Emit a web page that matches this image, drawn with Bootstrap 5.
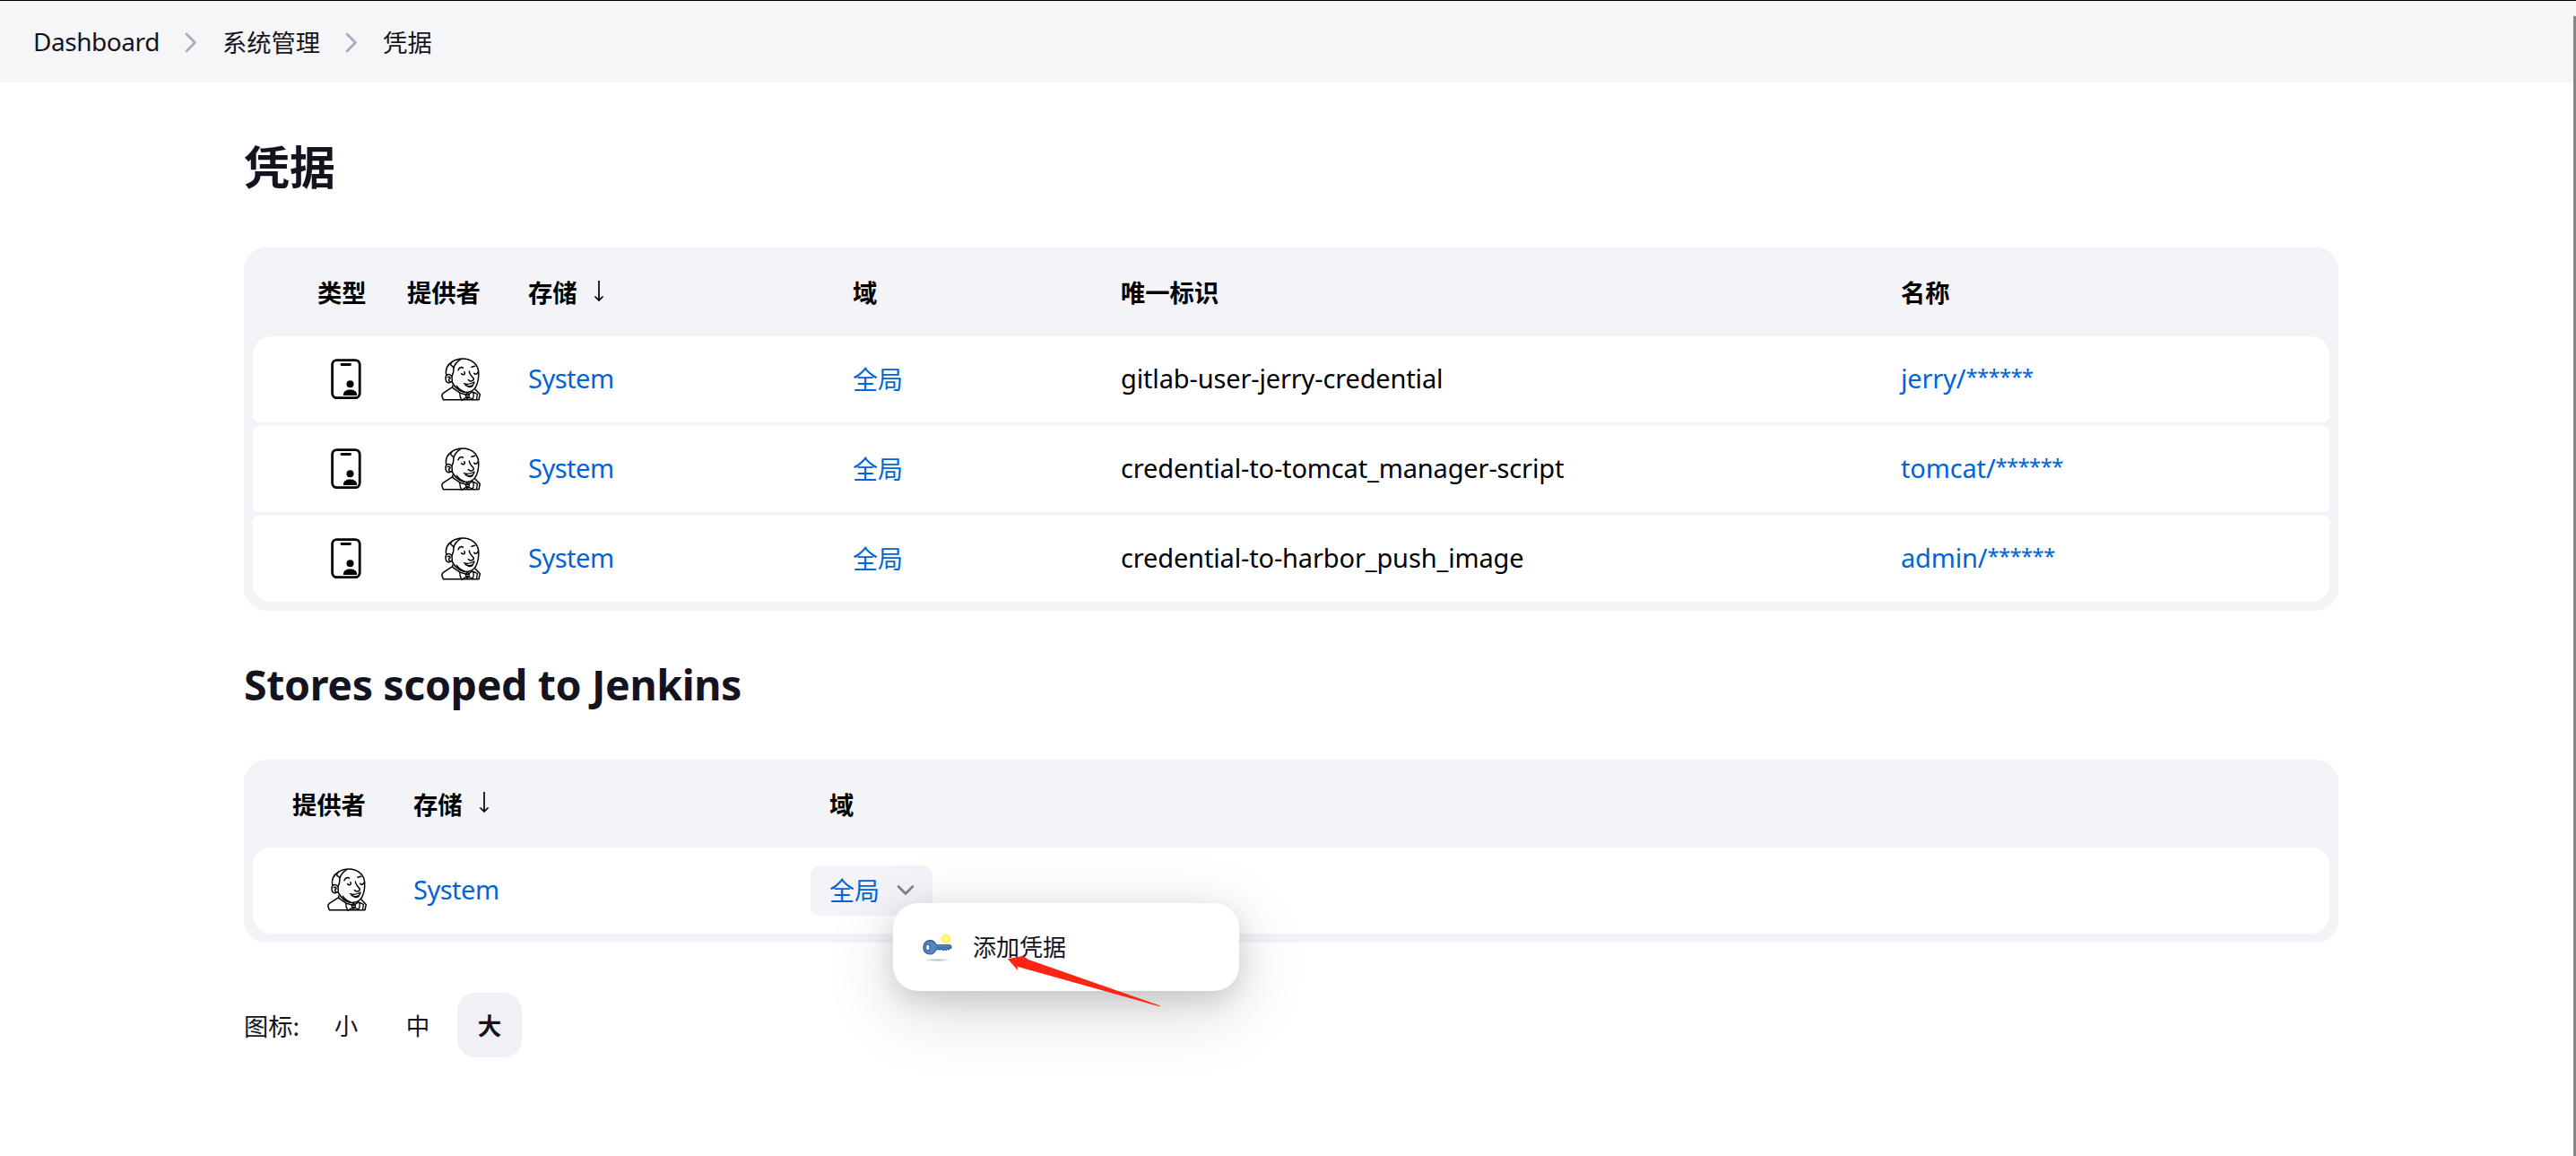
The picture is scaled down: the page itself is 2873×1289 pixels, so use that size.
<!DOCTYPE html>
<html lang="zh-CN">
<head>
<meta charset="utf-8">
<title>凭据 [Jenkins]</title>
<link href="https://cdn.jsdelivr.net/npm/bootstrap@5.3.0/dist/css/bootstrap.min.css" rel="stylesheet">
<style>
  body { font-family: "Noto Sans", "Noto Sans CJK SC", sans-serif; font-size: 28px; line-height: 40px; color: #14141f; background: #fff; height: 1289px; overflow: hidden; }
  .crumb-bar { height: 92px; background: #f6f6f8; border-top: 1px solid #000; padding: 0 0 2px 37px; }
  .zh { font-family: "Noto Sans CJK SC", sans-serif; font-size: 27.3px; }
  .crumb-root { letter-spacing: -.45px; }
  .crumb-sep { width: 14px; height: 24px; margin: 2px 28px 0; flex: none; }
  .lat { display: block; font-size: 29px; letter-spacing: -.15px; padding-bottom: 3px; }
  .store-name { letter-spacing: -.5px; }
  .stars { font-size: 24px; letter-spacing: -.7px; line-height: 0; vertical-align: 4px; }
  .page-main { padding: 0 265px 0 272px; }
  .page-title { font-family: "Noto Sans CJK SC", sans-serif; font-size: 51px; line-height: 60px; font-weight: 700; margin: 62px 0 62px; }
  .sub-title { font-size: 46.5px; line-height: 60px; font-weight: 700; letter-spacing: -.37px; margin: 52px 0 54px; white-space: nowrap; }
  .cred-table { background: #f3f3f8; border-radius: 25px; padding: 0 10px 10px; color: #000; }
  .cred-head, .cred-line { display: grid; align-items: center; }
  .cred-head { height: 99px; font-weight: 700; padding-bottom: 1px; }
  .scoped .cred-head { height: 98px; }
  .cred-line { height: 96px; background: #fff; border-radius: 7px; margin-bottom: 4px; }
  .cred-line:nth-child(2) { border-top-left-radius: 20px; border-top-right-radius: 20px; }
  .cred-line:last-child { border-bottom-left-radius: 20px; border-bottom-right-radius: 20px; margin-bottom: 0; }
  .all .cred-head, .all .cred-line { grid-template-columns: 72px 100px 135px 362px 299px 870px 1fr; }
  .scoped .cred-head, .scoped .cred-line { grid-template-columns: 44px 135px 464px 1fr; }
  .cred-table a { color: #0064d9; text-decoration: none; }
  .domain { font-size: 28px; padding-bottom: 2px; }
  .ico-type { width: 34px; height: 46px; margin-left: 15px; }
  .ico-jk { width: 44px; height: 48px; margin-left: 38px; }
  .scoped .ico-jk { margin: 0 0 3px 39px; }
  .scope-pill { width: 136px; height: 56px; border-radius: 11px; background: #f3f3f8; margin-left: -21px; padding: 0 20px 0 21px; }
  .chev { width: 20px; height: 12px; }
  .pop-menu { position: absolute; left: 92px; top: 42px; width: 386px; height: 98px; border-radius: 28px; background: #fff; padding: 0 33px; gap: 23px; color: #14141f; box-shadow: 0 10px 30px rgba(0,0,20,.13), 0 20px 80px rgba(0,0,20,.16); z-index: 5; }
  .pop-menu .zh { font-size: 26px; padding-bottom: 2px; }
  .key-ico { width: 33px; height: 33px; }
  .pointer { position: absolute; left: 1120px; top: 1062px; width: 178px; height: 64px; z-index: 6; }
  .size-row { margin-top: 56px; height: 72px; }
  .size-label { width: 78px; padding-bottom: 1px; }
  .size-opt { width: 72px; height: 72px; border-radius: 20px; padding-bottom: 1px; font-size: 26.5px; }
  .size-opt.current { background: #f1f0f7; font-weight: 700; }
  .scroll-thumb { position: absolute; right: 0; top: 18px; width: 3px; height: 1271px; background: #868686; }
  .sort { width: 12px; height: 25px; margin: 0 0 2px 18px; }
</style>
</head>
<body class="position-relative">
<svg class="d-none" xmlns="http://www.w3.org/2000/svg">
  <symbol id="type" viewBox="0 0 34 46">
    <rect x="1.600" y="1.600" width="30.600" height="42" rx="5" fill="none" stroke="#000" stroke-width="2.800"/>
    <path d="M12 6.500h9.500" stroke="#000" stroke-width="2.800" stroke-linecap="round"/>
    <circle cx="21.500" cy="28.300" r="4" fill="#000"/><path d="M14 41v-1.500c0-3 3.500-5 7.500-5s7.500 2 7.500 5V41z" fill="#000"/>
  </symbol>
  <symbol id="butler" viewBox="0 0 132 144">
    <g fill="none" stroke="#000" stroke-width="4.500" stroke-linecap="round" stroke-linejoin="round">
      <path d="M17 55C14 40 20 22 37 13C58 0 88-1 107 14C122 25 127 43 125 62C124 80 120 94 110 105C101 113 90 117 76 115C62 111 49 102 42 90L36 80"/>
      <path d="M65 5C52 14 43 23 42 35C42 45 41 53 36 61M37 13C31 20 29 26 38 28L42 34"/>
      <path d="M34 60C25 52 15 55 15 68C15 80 22 86 30 82L36 79M22 65C28 62 32 66 29 70C25 71 24 77 29 79M36 62L37 80"/>
      <path d="M57 41C60 32 69 29 73 34M102 31L113 28M68 53C72 58 78 57 79 52L78 47M110 52C114 57 121 55 122 49"/>
      <path d="M94 45C95 56 103 63 109 69C110 76 103 79 96 77L91 74"/>
      <path d="M76 86C87 90 101 87 111 81C110 95 91 98 81 91M87 94C96 100 104 97 106 93" stroke-width="4"/>
      <path d="M52 94C58 104 66 109 78 114M38 98L7 118C3 121 2 127 4 132L7 140H126L130 122L114 105M38 93L39 101L61 116"/>
      <path d="M62 117C62 127 64 135 69 142L87 130L104 138C110 133 110 120 105 113L88 125zM81 124L88 118L94 124L93 134L86 136zM108 115L121 121L119 137" stroke-width="4"/>
    </g>
  </symbol>
  <symbol id="crumb" viewBox="0 0 14 24"><path d="M2 3l9.500 9.500L2 22" fill="none" stroke="#acabbd" stroke-width="2.800" stroke-linecap="round" stroke-linejoin="round"/></symbol>
  <symbol id="down" viewBox="0 0 12 25"><path d="M6 1v22M1.500 18.500L6 23l4.500-4.500" fill="none" stroke="#000" stroke-width="1.700"/></symbol>
</svg>

<nav class="crumb-bar d-flex align-items-center">
  <span class="crumb-root">Dashboard</span>
  <svg class="crumb-sep"><use href="#crumb"/></svg>
  <span class="zh">系统管理</span>
  <svg class="crumb-sep"><use href="#crumb"/></svg>
  <span class="zh">凭据</span>
</nav>

<main class="page-main">
  <h1 class="page-title">凭据</h1>
  <section class="cred-table all">
    <div class="cred-head zh"><span></span><span>类型</span><span>提供者</span><span class="d-flex align-items-center">存储<svg class="sort"><use href="#down"/></svg></span><span>域</span><span>唯一标识</span><span>名称</span></div>
    <div class="cred-line"><span></span><svg class="ico-type"><use href="#type"/></svg><svg class="ico-jk"><use href="#butler"/></svg><a href="#" class="lat store-name">System</a><a href="#" class="zh domain">全局</a><span class="lat">gitlab-user-jerry-credential</span><a href="#" class="lat">jerry/<span class="stars">******</span></a></div>
    <div class="cred-line"><span></span><svg class="ico-type"><use href="#type"/></svg><svg class="ico-jk"><use href="#butler"/></svg><a href="#" class="lat store-name">System</a><a href="#" class="zh domain">全局</a><span class="lat">credential-to-tomcat_manager-script</span><a href="#" class="lat">tomcat/<span class="stars">******</span></a></div>
    <div class="cred-line"><span></span><svg class="ico-type"><use href="#type"/></svg><svg class="ico-jk"><use href="#butler"/></svg><a href="#" class="lat store-name">System</a><a href="#" class="zh domain">全局</a><span class="lat">credential-to-harbor_push_image</span><a href="#" class="lat">admin/<span class="stars">******</span></a></div>
  </section>

  <h2 class="sub-title">Stores scoped to Jenkins</h2>
  <section class="cred-table scoped">
    <div class="cred-head zh"><span></span><span>提供者</span><span class="d-flex align-items-center">存储<svg class="sort"><use href="#down"/></svg></span><span>域</span></div>
    <div class="cred-line"><span></span><svg class="ico-jk"><use href="#butler"/></svg><a href="#" class="lat store-name">System</a>
      <div class="scope-pill position-relative d-flex align-items-center justify-content-between">
        <a href="#" class="zh domain">全局</a>
        <svg class="chev" viewBox="0 0 20 12"><path d="M2 1.500l8 8 8-8" fill="none" stroke="#808087" stroke-width="2.600" stroke-linecap="round" stroke-linejoin="round"/></svg>
        <div class="pop-menu d-flex align-items-center">
          <svg class="key-ico" viewBox="0 0 33 33">
            <defs>
              <radialGradient id="glow"><stop offset="0" stop-color="#ffffd0"/><stop offset=".35" stop-color="#fff9a0"/><stop offset=".55" stop-color="#fff23a"/><stop offset="1" stop-color="#fff23a" stop-opacity="0"/></radialGradient>
              <radialGradient id="shade"><stop offset="0" stop-color="#bbb"/><stop offset="1" stop-color="#bbb" stop-opacity="0"/></radialGradient>
            </defs>
            <ellipse cx="16.500" cy="30.500" rx="16" ry="2" fill="url(#shade)"/>
            <circle cx="26" cy="7" r="6.500" fill="url(#glow)"/>
            <path d="M.8 16.300C.8 11.800 4 8.600 8.200 8.600c3.300 0 5.600 1.900 7 4.900l15.500.2 1.500 2-.8 1.800-1.400-.5-1 2-1.600-1-1.200 1.600-1.500-1-1.500 1-1.500-1H15.200c-1.400 3.500-3.700 5.400-7 5.400C4 24 .8 20.800 .8 16.300z" fill="#5586c0" stroke="#2b578f" stroke-width="1.100"/>
            <rect x="3.800" y="13.200" width="4" height="6.400" rx="1.800" fill="#fff" stroke="#2b578f"/>
            <path d="M15 16.200h15" stroke="#2f64a5" stroke-width="1"/>
          </svg>
          <span class="zh">添加凭据</span>
        </div>
      </div>
    </div>
  </section>

  <div class="size-row d-flex align-items-center">
    <span class="zh size-label">图标:</span>
    <div class="d-flex gap-2">
      <span class="zh size-opt d-flex align-items-center justify-content-center">小</span>
      <span class="zh size-opt d-flex align-items-center justify-content-center">中</span>
      <span class="zh size-opt current d-flex align-items-center justify-content-center">大</span>
    </div>
  </div>
</main>
<svg class="pointer" viewBox="1120 1062 178 64"><path d="M1123.800 1069.300L1141 1066l6 4L1294 1121.500l-1 .7L1134.500 1077.700l.8 4.500z" fill="#ff2413"/></svg>
<div class="scroll-thumb"></div>
<script src="https://cdn.jsdelivr.net/npm/bootstrap@5.3.0/dist/js/bootstrap.bundle.min.js"></script>
</body>
</html>
